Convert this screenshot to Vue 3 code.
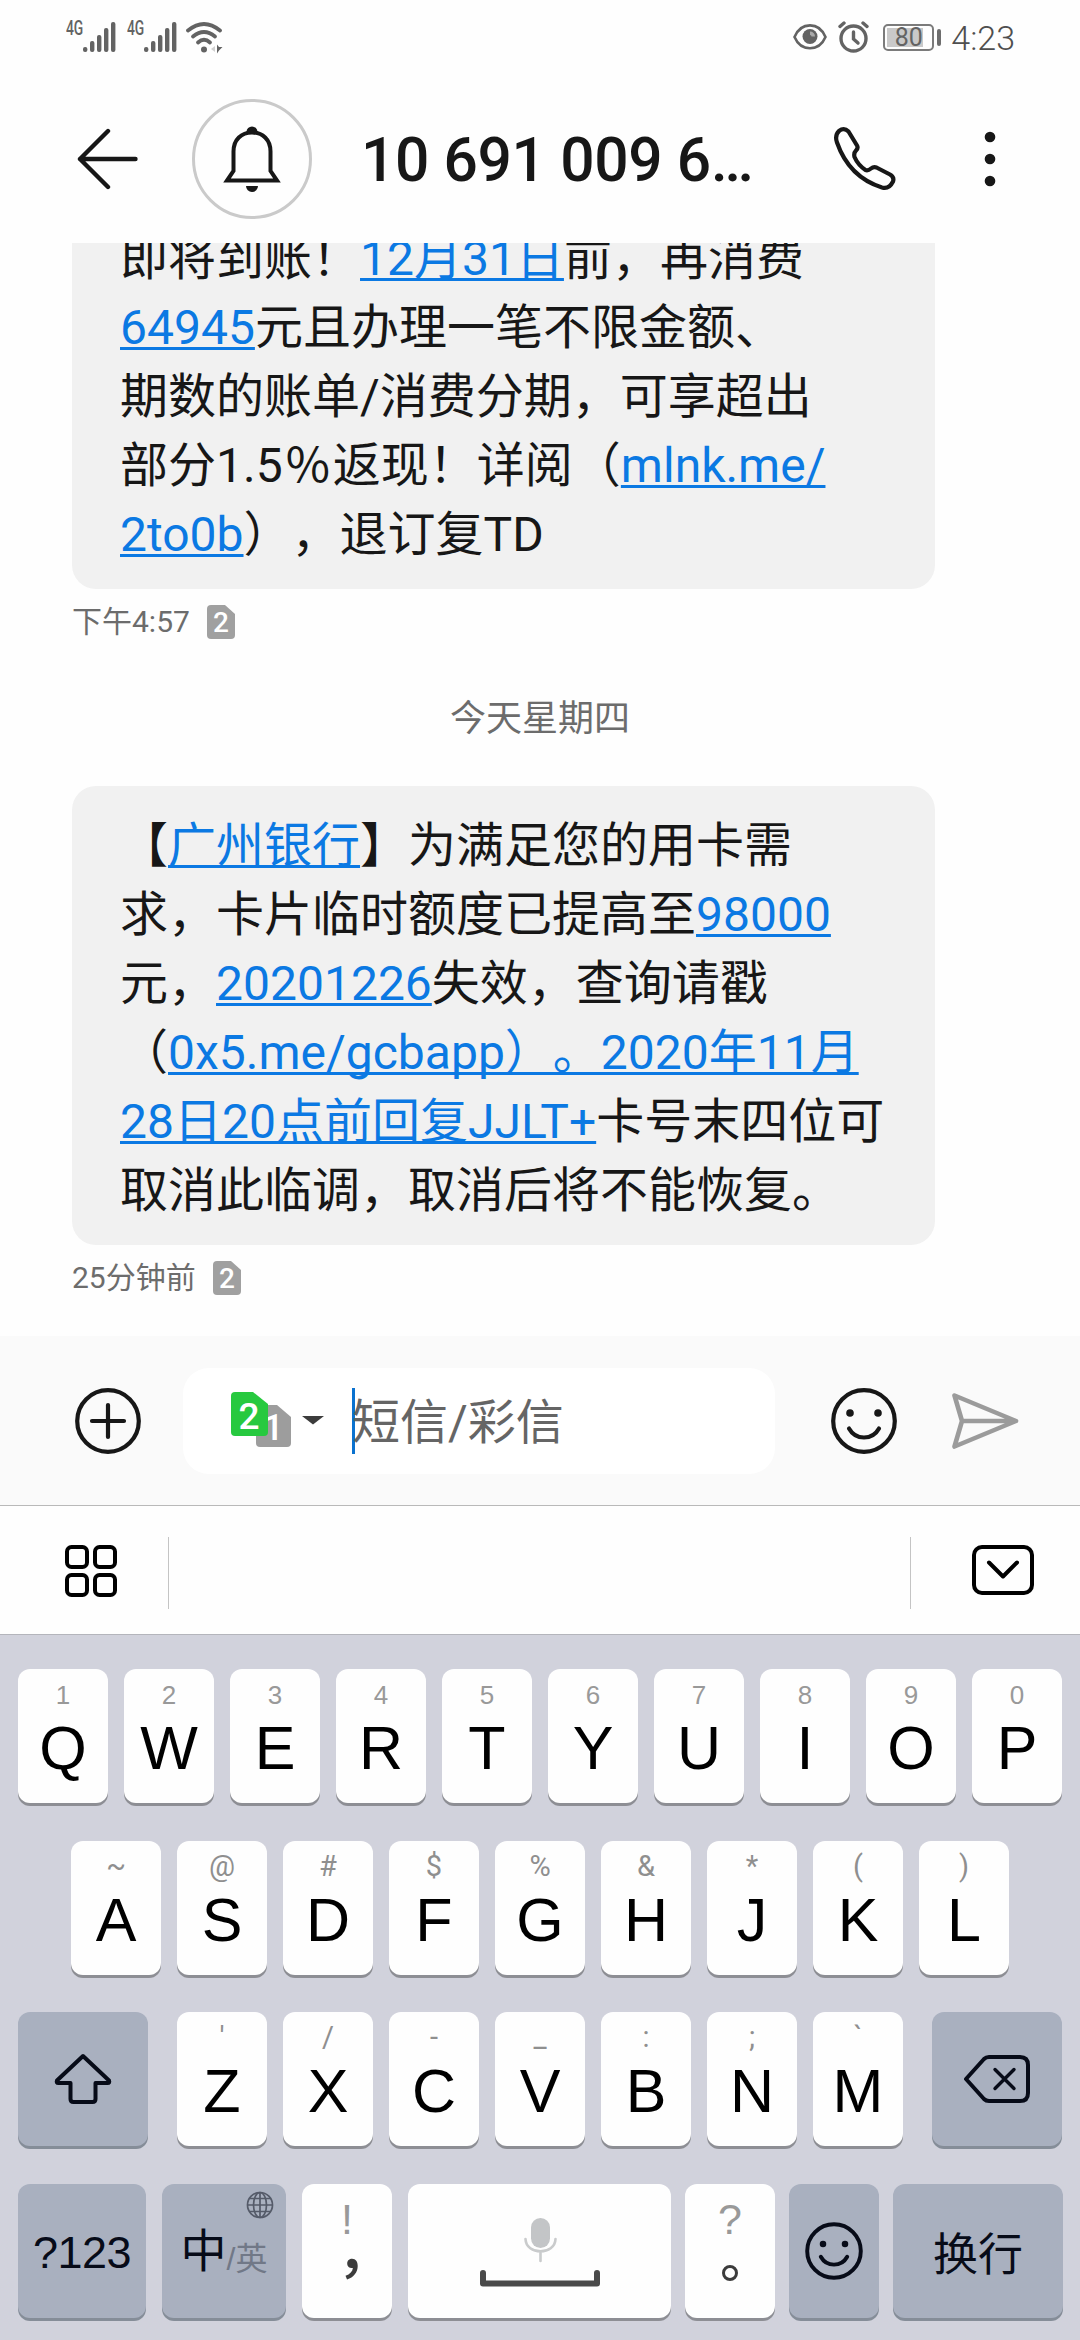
<script setup>
const row1 = [
  ['1', 'Q'], ['2', 'W'], ['3', 'E'], ['4', 'R'], ['5', 'T'],
  ['6', 'Y'], ['7', 'U'], ['8', 'I'], ['9', 'O'], ['0', 'P'],
]
const row2 = [
  ['~', 'A'], ['@', 'S'], ['#', 'D'], ['$', 'F'], ['%', 'G'],
  ['&', 'H'], ['*', 'J'], ['(', 'K'], [')', 'L'],
]
const row3 = [
  ["'", 'Z'], ['/', 'X'], ['-', 'C'], ['_', 'V'],
  [':', 'B'], [';', 'N'], ['`', 'M'],
]
const bars = [5, 11, 17, 24, 30]
</script>

<template>
  <div class="screen">
    <div class="status">
      <div class="status-left">
        <div v-for="n in 2" :key="n" class="signal">
          <span class="net">4G</span>
          <svg width="33" height="30" viewBox="0 0 33 30">
            <rect v-for="(h, i) in bars" :key="i" :x="i * 7" :y="30 - h" width="4.4" :height="h" rx="2" fill="#636363" />
          </svg>
        </div>
        <svg class="wifi" width="38" height="32" viewBox="0 0 38 32" fill="none" stroke="#636363" stroke-width="3.8" stroke-linecap="round">
          <path d="M2 8.5Q18 -4.5 34 8.5" />
          <path d="M7 14.5Q18 5.5 29 14.5" />
          <path d="M12 20.5Q18 15 24 20.5" />
          <circle cx="18" cy="27.5" r="3" fill="#636363" stroke="none" />
          <path d="M29 24v6l-4-3z" fill="#d0d0d0" stroke="none" />
          <path d="M31 22.500v9l2-3 3.500-3.500-3.500 0z" fill="#636363" stroke="none" />
        </svg>
      </div>
      <div class="status-right">
        <svg class="eye" width="34" height="28" viewBox="0 0 34 28" fill="none" stroke="#636363" stroke-width="2.6">
          <path d="M1.500 14C8 -1.500 26 -1.500 32.500 14C26 29 8 29 1.500 14Z" />
          <circle cx="17" cy="13.500" r="7.500" fill="#636363" stroke="none" />
          <path d="M17 8.500a5 5 0 0 1 5 5h-3.500q0-1.500-1.500-1.500z" fill="#aaa" stroke="none" />
        </svg>
        <svg class="alarm" width="31" height="32" viewBox="0 0 31 32" fill="none" stroke="#636363" stroke-width="3.4" stroke-linecap="round">
          <circle cx="15.500" cy="17.500" r="12.500" />
          <path d="M15.500 11v7l4.500 4" />
          <path d="M2 5.500l4-3.500M29 5.500l-4-3.500" />
        </svg>
        <div class="battery"><span>80</span></div>
        <div class="nub"></div>
        <span class="clock">4:23</span>
      </div>
    </div>

    <header class="header">
      <svg class="back" width="62" height="62" viewBox="0 0 62 62" fill="none" stroke="#171717" stroke-width="4.400" stroke-linecap="round" stroke-linejoin="round">
        <path d="M31 3L3 31l28 28M3 31h55.500" />
      </svg>
      <div class="avatar">
        <svg width="60" height="70" viewBox="0 0 60 70" fill="none" stroke="#171717" stroke-width="4">
          <path d="M5 56.500H55L48.500 47V27.500C48.500 15.500 40.500 8.500 30 8.500S11.500 15.500 11.500 27.500V47Z" />
          <path d="M24.500 8a5.500 5.500 0 0 1 11 0zM24 62h12a6 6 0 0 1-12 0z" fill="#171717" stroke="none" />
        </svg>
      </div>
      <h1 class="title">10 691 009 6…</h1>
      <svg class="phone" width="64" height="66" viewBox="0 0 64 66" fill="none" stroke="#171717" stroke-width="4.200" stroke-linejoin="round">
        <path d="M6 5Q11 1 15.500 5.500L24 19.500Q25.500 22 23 24.500Q20.500 27 21.500 31Q25 39 32.500 44Q35 45 38 42.500Q40.500 40.500 43.500 41.500L57 48.500Q61.500 51 60 55.500Q56 63.500 49 61.500Q16 51 4 16.500Q1.500 9.500 6 5Z" />
      </svg>
      <svg class="more" width="12" height="56" viewBox="0 0 12 56" fill="#171717">
        <circle cx="6" cy="6" r="5.300" /><circle cx="6" cy="28" r="5.300" /><circle cx="6" cy="50" r="5.300" />
      </svg>
    </header>

    <main class="chat">
      <div class="bubble first">
        <p>即将到账！<a>12月31日</a>前，再消费</p>
        <p><a>64945</a>元且办理一笔不限金额、</p>
        <p>期数的账单/消费分期，可享超出</p>
        <p>部分1.5<span class="pct">%</span>返现！详阅（<a>mlnk.me/</a></p>
        <p><a>2to0b</a>），退订复TD</p>
      </div>
      <div class="meta">
        <span>下午4:57</span>
        <svg width="28" height="34" viewBox="0 0 28 34">
          <path d="M4 0H18L28 9V30a4 4 0 0 1-4 4H4a4 4 0 0 1-4-4V4a4 4 0 0 1 4-4z" fill="#a0a0a0" />
          <text x="14" y="27" text-anchor="middle" class="sim-num" font-size="28" fill="#fff">2</text>
        </svg>
      </div>
      <div class="day">今天星期四</div>
      <div class="bubble">
        <p>【<a>广州银行</a>】为满足您的用卡需</p>
        <p>求，卡片临时额度已提高至<a>98000</a></p>
        <p>元，<a>20201226</a>失效，查询请戳</p>
        <p>（<a>0x5.me/gcbapp）。2020年11月</a></p>
        <p><a>28日20点前回复JJLT+</a>卡号末四位可</p>
        <p>取消此临调，取消后将不能恢复。</p>
      </div>
      <div class="meta">
        <span>25分钟前</span>
        <svg width="28" height="34" viewBox="0 0 28 34">
          <path d="M4 0H18L28 9V30a4 4 0 0 1-4 4H4a4 4 0 0 1-4-4V4a4 4 0 0 1 4-4z" fill="#a0a0a0" />
          <text x="14" y="27" text-anchor="middle" class="sim-num" font-size="28" fill="#fff">2</text>
        </svg>
      </div>
    </main>

    <div class="compose">
      <svg class="plus" width="66" height="66" viewBox="0 0 66 66" fill="none" stroke="#171717" stroke-width="4.200" stroke-linecap="round">
        <circle cx="33" cy="33" r="30.800" /><path d="M33 17v32M17 33h32" />
      </svg>
      <div class="field">
        <svg class="sims" width="62" height="58" viewBox="0 0 62 58">
          <path d="M29 13H46L60 25V51a4 4 0 0 1-4 4H29a4 4 0 0 1-4-4V17a4 4 0 0 1 4-4z" fill="#9d9d9d" />
          <text x="42.500" y="48" text-anchor="middle" class="sim-num" font-size="36" fill="#fff">1</text>
          <path d="M4 0H22L37 12V40a4 4 0 0 1-4 4H4a4 4 0 0 1-4-4V4a4 4 0 0 1 4-4z" fill="#27c93f" />
          <text x="18" y="37" text-anchor="middle" class="sim-num" font-size="37" fill="#fff">2</text>
        </svg>
        <svg class="drop" width="22" height="9" viewBox="0 0 22 9"><path d="M0 0H22L11 8.500z" fill="#3c3c3c" /></svg>
        <i class="caret"></i>
        <span class="placeholder">短信/彩信</span>
      </div>
      <svg class="smile" width="66" height="66" viewBox="0 0 66 66" fill="none" stroke="#171717" stroke-width="4.200" stroke-linecap="round">
        <circle cx="33" cy="33" r="30.800" />
        <path d="M18 40.500Q23 49.500 33 49.500T48 40.500" />
        <circle cx="19" cy="25" r="3.800" fill="#171717" stroke="none" /><circle cx="47" cy="25" r="3.800" fill="#171717" stroke="none" />
      </svg>
      <svg class="send" width="68" height="58" viewBox="0 0 68 58" fill="none" stroke="#9b9b9b" stroke-width="4.600" stroke-linejoin="round" stroke-linecap="round">
        <path d="M3.500 3.500L65 29L3.500 54.500L11 29ZM11 29H65" />
      </svg>
    </div>

    <div class="toolbar">
      <svg class="grid" width="52" height="52" viewBox="0 0 52 52" fill="none" stroke="#000" stroke-width="4">
        <rect x="2" y="2" width="20" height="20" rx="4.500" /><rect x="30" y="2" width="20" height="20" rx="4.500" />
        <rect x="2" y="30" width="20" height="20" rx="4.500" /><rect x="30" y="30" width="20" height="20" rx="4.500" />
      </svg>
      <i class="divider"></i>
      <div class="candidates"></div>
      <i class="divider"></i>
      <svg class="hide" width="62" height="50" viewBox="0 0 62 50" fill="none" stroke="#000" stroke-width="4" stroke-linecap="round" stroke-linejoin="round">
        <rect x="2" y="2" width="58" height="46" rx="8" /><path d="M17 17.500L31 31.500L45 17.500" />
      </svg>
    </div>

    <div class="keyboard">
      <div class="keys">
        <div v-for="k in row1" :key="k[1]" class="key"><span class="hint">{{ k[0] }}</span><span class="letter">{{ k[1] }}</span></div>
      </div>
      <div class="keys">
        <div v-for="k in row2" :key="k[1]" class="key"><span class="hint symbol">{{ k[0] }}</span><span class="letter">{{ k[1] }}</span></div>
      </div>
      <div class="keys third">
        <div class="key dark shift">
          <svg width="60" height="54" viewBox="0 0 60 54" fill="none" stroke="#070b18" stroke-width="4" stroke-linejoin="round">
            <path d="M30 4L56 28.500Q57 31 54.500 31H42.500V47Q42.500 50 39.500 50H20.500Q17.500 50 17.500 47V31H5.500Q3 31 4 28.500Z" />
          </svg>
        </div>
        <div class="keys inner">
          <div v-for="k in row3" :key="k[1]" class="key"><span class="hint symbol">{{ k[0] }}</span><span class="letter">{{ k[1] }}</span></div>
        </div>
        <div class="key dark del">
          <svg width="68" height="50" viewBox="0 0 68 50" fill="none" stroke="#070b18" stroke-width="4" stroke-linejoin="round" stroke-linecap="round">
            <path d="M3 25L21 5Q23 3 26 3H57Q65 3 65 11V39Q65 47 57 47H26Q23 47 21 45Z" />
            <path d="M32 15.500l19 19M51 15.500l-19 19" stroke-width="3.400" />
          </svg>
        </div>
      </div>
      <div class="keys last">
        <div class="key dark num">?123</div>
        <div class="key dark lang">
          <span class="zh">中</span><span class="en">/英</span>
          <svg class="globe" width="28" height="28" viewBox="0 0 28 28" fill="none" stroke="#555b69" stroke-width="1.700">
            <circle cx="14" cy="14" r="12.500" /><ellipse cx="14" cy="14" rx="6.500" ry="12.500" />
            <path d="M14 1.500v25M1.500 14h25M3.500 7.500h21M3.500 20.500h21" />
          </svg>
        </div>
        <div class="key punct">
          <span class="mark">!</span><span class="comma">，</span>
        </div>
        <div class="key space">
          <svg width="124" height="76" viewBox="0 0 124 76" fill="none">
            <rect x="53" y="3" width="19" height="30" rx="9.500" fill="#c3c5c7" />
            <path d="M47.500 24C48 40.500 77 40.500 77.500 24M62.500 36.500V46" stroke="#c9cbcc" stroke-width="2.600" stroke-linecap="round" />
            <path d="M5 58V68.500H119V58" stroke="#4a4a4a" stroke-width="6" stroke-linecap="round" stroke-linejoin="round" />
          </svg>
        </div>
        <div class="key punct">
          <span class="mark">?</span><span class="stop"></span>
        </div>
        <div class="key dark emoji">
          <svg width="58" height="58" viewBox="0 0 66 66" fill="none" stroke="#070b18" stroke-width="4.500" stroke-linecap="round">
            <circle cx="33" cy="33" r="30.500" />
            <path d="M18 39.500Q23 48.500 33 48.500T48 39.500" />
            <circle cx="20.500" cy="25" r="3.700" fill="#070b18" stroke="none" /><circle cx="45.500" cy="25" r="3.700" fill="#070b18" stroke="none" />
          </svg>
        </div>
        <div class="key dark enter">换行</div>
      </div>
    </div>
  </div>
</template>

<style>
body {
  margin: 0;
  background: #fefefe;
}
</style>

<style scoped>
.screen {
  width: 1080px;
  height: 2340px;
  overflow: hidden;
  display: flex;
  flex-direction: column;
  background: #fefefe;
  font-family: Roboto, "Noto Sans CJK SC", sans-serif;
  color: #171717;
  text-spacing-trim: space-all;
}
svg {
  display: block;
  flex: none;
}
.status {
  height: 99px;
  flex: none;
  box-sizing: border-box;
  padding: 22px 65px 0 66px;
  display: flex;
  justify-content: space-between;
  align-items: flex-start;
  color: #636363;
}
.status-left,
.status-right,
.signal {
  display: flex;
  align-items: flex-start;
}
.signal {
  width: 61px;
}
.net {
  width: 17px;
  font: 500 19.5px/14px Roboto, sans-serif;
  transform: scaleX(0.71);
  transform-origin: 0 0;
  white-space: nowrap;
}
.wifi {
  margin-left: -2px;
}
.eye {
  margin-top: 1px;
}
.alarm {
  margin-left: 11px;
  margin-top: -1px;
}
.battery {
  margin: 2px 0 0 14px;
  width: 51px;
  height: 27px;
  box-sizing: border-box;
  border: 2px solid #7b7b7b;
  border-radius: 5px;
  padding: 2px;
  background: linear-gradient(#c9c9c9, #c9c9c9) 2px 2px / 36px 19px no-repeat;
  font: 400 25px/20px Roboto, sans-serif;
  text-align: center;
}
.nub {
  width: 4px;
  height: 17px;
  margin: 7px 10px 0 3px;
  border-radius: 2px;
  background: #6d6d6d;
}
.clock {
  font: 300 34px/40px Roboto, sans-serif;
  margin-top: -4px;
  color: #4f4f4f;
}
.header {
  height: 144px;
  flex: none;
  display: flex;
  align-items: flex-start;
  padding-left: 77px;
}
.back {
  margin-top: 29px;
}
.avatar {
  width: 114px;
  height: 114px;
  margin-left: 53px;
  border: 3px solid #cacaca;
  border-radius: 50%;
  display: flex;
  align-items: center;
  justify-content: center;
}
.title {
  margin: 26px 0 0 49px;
  width: 474px;
  font: 500 60.5px/72px Roboto, sans-serif;
  letter-spacing: -0.4px;
  white-space: nowrap;
}
.phone {
  margin: 27px 0 0 -2px;
}
.more {
  margin: 32px 0 0 87px;
}
.chat {
  height: 1093px;
  flex: none;
  overflow: hidden;
  padding-left: 72px;
}
.bubble {
  width: 863px;
  box-sizing: border-box;
  padding: 25px 0 20px 48px;
  border-radius: 24px;
  background: #f1f1f1;
  font-size: 48px;
  line-height: 69px;
  white-space: nowrap;
}
.bubble.first {
  margin-top: -44px;
}
.bubble p {
  margin: 0;
  height: 69px;
}
.bubble a {
  color: #0b79e3;
  text-decoration: underline;
  text-decoration-thickness: 2.5px;
  text-underline-offset: 3px;
  text-decoration-skip-ink: none;
}
.pct {
  margin: 0 3px;
  font-family: "Noto Sans CJK SC", sans-serif;
  line-height: 1;
}
.meta {
  display: flex;
  align-items: center;
  gap: 17px;
  height: 36px;
  margin-top: 15px;
  font-size: 30px;
  line-height: 36px;
  color: #6c6c6c;
}
.sim-num {
  font-family: Roboto, sans-serif;
  font-weight: 500;
}
.day {
  width: 936px;
  margin: 53px 0 42px;
  height: 51px;
  line-height: 53px;
  text-align: center;
  font-size: 36px;
  color: #6c6c6c;
}
.compose {
  height: 169px;
  flex: none;
  display: flex;
  align-items: center;
  padding-left: 75px;
  background: #fafafa;
  border-bottom: 1px solid #b9b9b9;
}
.field {
  width: 592px;
  height: 106px;
  margin-left: 42px;
  border-radius: 26px;
  background: #fff;
  display: flex;
  align-items: center;
}
.sims {
  margin-left: 48px;
}
.drop {
  margin-left: 9px;
}
.caret {
  width: 3px;
  height: 66px;
  margin-left: 28px;
  background: #0b72cf;
}
.placeholder {
  font-size: 48px;
  line-height: 66px;
  margin-left: -3px;
  padding-top: 4px;
  color: #656565;
  white-space: nowrap;
}
.smile {
  margin-left: 56px;
}
.send {
  margin-left: 54px;
}
.toolbar {
  height: 128px;
  flex: none;
  display: flex;
  align-items: flex-start;
  padding-left: 65px;
  background: #fefefe;
  border-bottom: 1px solid #b4b5bb;
}
.grid {
  margin-top: 39px;
}
.divider {
  width: 1px;
  height: 72px;
  margin-top: 31px;
  background: #c4c4c4;
}
.grid + .divider {
  margin-left: 51px;
}
.candidates {
  width: 741px;
}
.hide {
  margin: 39px 0 0 61px;
}
.keyboard {
  flex: 1;
  padding: 34px 18px 0;
  display: flex;
  flex-direction: column;
  gap: 37.7px;
  background: #d1d2dc;
}
.keys {
  display: flex;
  justify-content: center;
  gap: 16px;
  height: 134px;
}
.third {
  gap: 29px;
}
.key {
  width: 90px;
  flex: none;
  height: 134px;
  border-radius: 12px;
  background: #fefefe;
  box-shadow: 0 3px 0 #8d8e94;
  display: flex;
  flex-direction: column;
  align-items: center;
  font-family: "Liberation Sans", "Noto Sans CJK SC", sans-serif;
  color: #000;
}
.hint {
  height: 30px;
  margin-top: 11px;
  font-size: 26px;
  line-height: 30px;
  color: #999;
}
.symbol {
  font-family: Roboto, sans-serif;
  font-size: 29px;
  line-height: 28px;
  color: #8f8f8f;
}
.letter {
  margin-top: 4px;
  font-size: 61px;
  line-height: 68px;
}
.dark {
  background: #a9b0bf;
  box-shadow: 0 3px 0 #858d98;
  color: #070b18;
  justify-content: center;
}
.shift,
.del {
  width: 130px;
}
.last {
  gap: 0;
  justify-content: flex-start;
}
.num {
  width: 128px;
  box-sizing: border-box;
  padding-top: 4px;
  font-size: 45px;
  letter-spacing: -0.5px;
}
.lang {
  width: 124px;
  margin-left: 16px;
  position: relative;
  flex-direction: row;
}
.zh {
  font-size: 46px;
  line-height: 60px;
}
.en {
  margin-top: 15px;
  font-size: 32px;
  line-height: 40px;
  color: #717887;
}
.globe {
  position: absolute;
  top: 7px;
  right: 12px;
}
.punct {
  margin-left: 16px;
}
.mark {
  height: 44px;
  margin-top: 11px;
  font-size: 43px;
  line-height: 48px;
  color: #999;
}
.comma {
  align-self: flex-start;
  margin: -2px 0 0 35px;
  width: 50px;
  font: 500 58px/20px "Noto Sans CJK SC", sans-serif;
  color: #3c3c3c;
}
.stop {
  width: 10px;
  height: 10px;
  margin-top: 26px;
  border: 3px solid #3c3c3c;
  border-radius: 50%;
}
.space {
  width: 263px;
  margin-left: 16px;
}
.space svg {
  margin-top: 31px;
}
.space + .punct,
.emoji,
.enter {
  margin-left: 14px;
}
.enter {
  width: 170px;
  font-size: 45px;
  font-family: "Noto Sans CJK SC", sans-serif;
}
</style>
